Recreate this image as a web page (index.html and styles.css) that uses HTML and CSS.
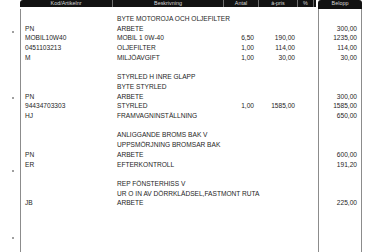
FILE: index.html
```html
<!DOCTYPE html>
<html lang="sv">
<head>
<meta charset="utf-8">
<title>Faktura</title>
<link rel="stylesheet" href="styles.css">
</head>
<body>
<div class="page">
  <div class="head">
    <div class="bar">
      <div class="hc">Kod/Artikelnr</div>
      <div class="hc">Beskrivning</div>
      <div class="hc">Antal</div>
      <div class="hc">à-pris</div>
      <div class="hc">%</div>
    </div>
    <div class="bel-head">Belopp</div>
  </div>
  <div class="rows">
    <div class="group">
      <div class="row"><span class="kod"></span><span class="besk">BYTE MOTOROJA OCH OLJEFILTER</span><span class="antal"></span><span class="pris"></span><span class="pct"></span><span class="bel"></span></div>
      <div class="row"><span class="kod">PN</span><span class="besk">ARBETE</span><span class="antal"></span><span class="pris"></span><span class="pct"></span><span class="bel">300,00</span></div>
      <div class="row"><span class="kod">MOBIL10W40</span><span class="besk">MOBIL 1 0W-40</span><span class="antal">6,50</span><span class="pris">190,00</span><span class="pct"></span><span class="bel">1235,00</span></div>
      <div class="row"><span class="kod">0451103213</span><span class="besk">OLJEFILTER</span><span class="antal">1,00</span><span class="pris">114,00</span><span class="pct"></span><span class="bel">114,00</span></div>
      <div class="row"><span class="kod">M</span><span class="besk">MILJÖAVGIFT</span><span class="antal">1,00</span><span class="pris">30,00</span><span class="pct"></span><span class="bel">30,00</span></div>
    </div>
    <div class="group">
      <div class="row"><span class="kod"></span><span class="besk">STYRLED H INRE GLAPP</span><span class="antal"></span><span class="pris"></span><span class="pct"></span><span class="bel"></span></div>
      <div class="row"><span class="kod"></span><span class="besk">BYTE STYRLED</span><span class="antal"></span><span class="pris"></span><span class="pct"></span><span class="bel"></span></div>
      <div class="row"><span class="kod">PN</span><span class="besk">ARBETE</span><span class="antal"></span><span class="pris"></span><span class="pct"></span><span class="bel">300,00</span></div>
      <div class="row"><span class="kod">94434703303</span><span class="besk">STYRLED</span><span class="antal">1,00</span><span class="pris">1585,00</span><span class="pct"></span><span class="bel">1585,00</span></div>
      <div class="row"><span class="kod">HJ</span><span class="besk">FRAMVAGNINSTÄLLNING</span><span class="antal"></span><span class="pris"></span><span class="pct"></span><span class="bel">650,00</span></div>
    </div>
    <div class="group">
      <div class="row"><span class="kod"></span><span class="besk">ANLIGGANDE BROMS BAK V</span><span class="antal"></span><span class="pris"></span><span class="pct"></span><span class="bel"></span></div>
      <div class="row"><span class="kod"></span><span class="besk">UPPSMÖRJNING BROMSAR BAK</span><span class="antal"></span><span class="pris"></span><span class="pct"></span><span class="bel"></span></div>
      <div class="row"><span class="kod">PN</span><span class="besk">ARBETE</span><span class="antal"></span><span class="pris"></span><span class="pct"></span><span class="bel">600,00</span></div>
      <div class="row"><span class="kod">ER</span><span class="besk">EFTERKONTROLL</span><span class="antal"></span><span class="pris"></span><span class="pct"></span><span class="bel">191,20</span></div>
    </div>
    <div class="group">
      <div class="row"><span class="kod"></span><span class="besk">REP FÖNSTERHISS V</span><span class="antal"></span><span class="pris"></span><span class="pct"></span><span class="bel"></span></div>
      <div class="row"><span class="kod"></span><span class="besk">UR O IN AV DÖRRKLÄDSEL,FASTMONT RUTA</span><span class="antal"></span><span class="pris"></span><span class="pct"></span><span class="bel"></span></div>
      <div class="row"><span class="kod">JB</span><span class="besk">ARBETE</span><span class="antal"></span><span class="pris"></span><span class="pct"></span><span class="bel">225,00</span></div>
    </div>
  </div>
</div>
</body>
</html>
```

FILE: styles.css
```css
html, body {
  margin: 0;
  padding: 0;
  background: #ffffff;
}

body {
  font-family: "Liberation Sans", Arial, sans-serif;
  color: #1e1e1e;
}

.page {
  width: 376px;
  height: 252px;
  box-sizing: border-box;
  padding-left: 20px;
  display: flex;
  flex-direction: column;
  overflow: hidden;
  background:
    radial-gradient(circle at 13px 32px, #8a8a8a 0.6px, transparent 1.2px),
    radial-gradient(circle at 13px 98px, #8a8a8a 0.6px, transparent 1.2px),
    radial-gradient(circle at 13px 171px, #8a8a8a 0.6px, transparent 1.2px),
    radial-gradient(circle at 13px 238px, #8a8a8a 0.6px, transparent 1.2px);
}

.head {
  display: flex;
  align-items: flex-start;
  height: 9px;
  flex: none;
}

.bar {
  display: grid;
  grid-template-columns: 93px 111px 35px 39px 16px;
  width: 296px;
  height: 7px;
  background: #121212;
  border-radius: 3px 0 0 0;
}

.hc {
  font-size: 5.4px;
  line-height: 7px;
  color: #d6d6d6;
  text-align: center;
  border-right: 1px solid #6e6e6e;
  white-space: nowrap;
}

.bel-head {
  margin-left: 2px;
  width: 44px;
  height: 9px;
  background: #121212;
  border-radius: 3px 3px 0 0;
  font-size: 5.4px;
  line-height: 7px;
  color: #d6d6d6;
  text-align: center;
}

.rows {
  flex: 1;
  border-left: 1px solid #8c8c8c;
  padding-top: 5px;
  background:
    linear-gradient(#8c8c8c, #8c8c8c) 297px 0 / 1px 100% no-repeat,
    linear-gradient(#8c8c8c, #8c8c8c) 340px 0 / 1px 100% no-repeat;
}

.group + .group {
  margin-top: 9.7px;
}

.row {
  display: grid;
  grid-template-columns: 92px 111px 35px 39px 16px 48px;
  font-size: 6.6px;
  line-height: 9.7px;
  white-space: nowrap;
}

.kod {
  padding-left: 4px;
}

.besk {
  padding-left: 4px;
}

.antal {
  text-align: right;
  padding-right: 5px;
}

.pris {
  text-align: right;
  padding-right: 3px;
}

.bel {
  text-align: right;
  padding-right: 5px;
}
```
